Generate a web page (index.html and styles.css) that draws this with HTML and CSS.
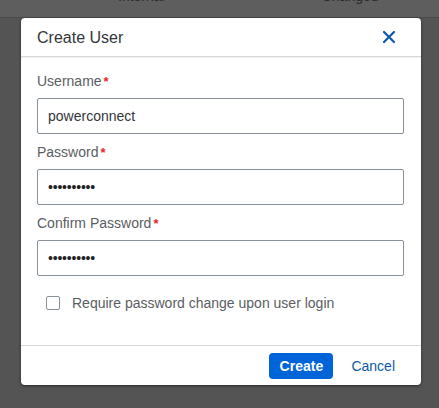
FILE: index.html
```html
<!DOCTYPE html>
<html>
<head>
<meta charset="utf-8">
<link rel="stylesheet" href="styles.css">
</head>
<body>
<div class="page">
  <div class="bg-header">
    <span class="bg-col bg-col1">Internal</span>
    <span class="bg-col bg-col2">Changed</span>
  </div>
  <div class="bg-rest"></div>
</div>
<div class="dialog">
  <div class="dlg-header">
    <span class="dlg-title">Create User</span>
    <svg class="close" width="14" height="14" viewBox="0 0 14 14"><path d="M2 2 L12 12 M12 2 L2 12" stroke="#0b5aa8" stroke-width="2.2" stroke-linecap="round" fill="none"/></svg>
  </div>
  <div class="dlg-body">
    <div class="field">
      <label class="lbl">Username<span class="req">*</span></label>
      <div class="input">powerconnect</div>
    </div>
    <div class="field">
      <label class="lbl">Password<span class="req">*</span></label>
      <div class="input dots">••••••••••</div>
    </div>
    <div class="field">
      <label class="lbl">Confirm Password<span class="req">*</span></label>
      <div class="input dots">••••••••••</div>
    </div>
    <div class="check-row">
      <span class="checkbox"></span>
      <span class="check-lbl">Require password change upon user login</span>
    </div>
  </div>
  <div class="dlg-footer">
    <button class="btn-primary">Create</button>
    <button class="btn-link">Cancel</button>
  </div>
</div>
</body>
</html>
```
FILE: styles.css
```css
html, body {
  margin: 0;
  padding: 0;
}
body {
  width: 439px;
  height: 408px;
  overflow: hidden;
  background: #545454;
  font-family: "Liberation Sans", Arial, sans-serif;
  position: relative;
}
.page {
  display: flex;
  flex-direction: column;
  height: 408px;
}
.bg-header {
  height: 17px;
  background: #5e5e5e;
  border-bottom: 1px solid #4a4a4a;
  position: relative;
  overflow: hidden;
  display: flex;
}
.bg-col {
  font-size: 14px;
  color: #2b2b2b;
  line-height: 14px;
  margin-top: -11px;
}
.bg-col1 { margin-left: 118px; }
.bg-col2 { margin-left: 157px; }
.bg-rest {
  flex: 1;
  background: #545454;
}
.dialog {
  position: absolute;
  left: 21px;
  top: 18px;
  width: 400px;
  height: 367px;
  background: #fff;
  border-radius: 4px;
  box-shadow: 0 1px 3px rgba(0,0,0,0.5);
  display: flex;
  flex-direction: column;
}
.dlg-header {
  height: 38px;
  border-bottom: 1px solid #d5d7da;
  display: flex;
  align-items: center;
  justify-content: space-between;
  padding: 0 25px 0 16px;
  box-shadow: 0 1px 1px rgba(0,0,0,0.05);
}
.dlg-title {
  font-size: 16px;
  color: #32363a;
  padding-top: 1px;
}
.close {
  display: block;
}
.dlg-body {
  flex: 1;
  padding: 14px 17px 0 16px;
}
.field {
  display: flex;
  flex-direction: column;
  margin-bottom: 9px;
}
.field + .field {
  margin-top: -1px;
}
.lbl {
  font-size: 14px;
  line-height: 20px;
  color: #5a5e62;
  margin-bottom: 6px;
}
.req {
  color: #e4262c;
  font-weight: bold;
  font-size: 13px;
  margin-left: 2px;
}
.input {
  height: 34px;
  border: 1px solid #89919a;
  border-radius: 2px;
  box-sizing: content-box;
  font-size: 14px;
  line-height: 34px;
  color: #32363a;
  padding-left: 10px;
}
.dots {
  font-size: 14px;
  letter-spacing: -0.2px;
  color: #222;
}
.check-row {
  display: flex;
  align-items: center;
  margin-top: 19px;
  padding-left: 9px;
}
.checkbox {
  width: 14px;
  height: 14px;
  border: 1px solid #89919a;
  border-radius: 2px;
  box-sizing: border-box;
  margin-right: 12px;
}
.check-lbl {
  font-size: 14px;
  color: #5a5e62;
}
.dlg-footer {
  height: 39px;
  border-top: 1px solid #d5d7da;
  display: flex;
  align-items: center;
  justify-content: flex-end;
  padding-right: 26px;
  gap: 18px;
}
.btn-primary {
  height: 26px;
  width: 64px;
  background: #0064d9;
  color: #fff;
  border: none;
  border-radius: 4px;
  font-family: "Liberation Sans", Arial, sans-serif;
  font-weight: bold;
  font-size: 14px;
  padding: 0;
}
.btn-link {
  background: none;
  border: none;
  padding: 0;
  color: #0b5aa8;
  font-family: "Liberation Sans", Arial, sans-serif;
  font-size: 14px;
}
```
